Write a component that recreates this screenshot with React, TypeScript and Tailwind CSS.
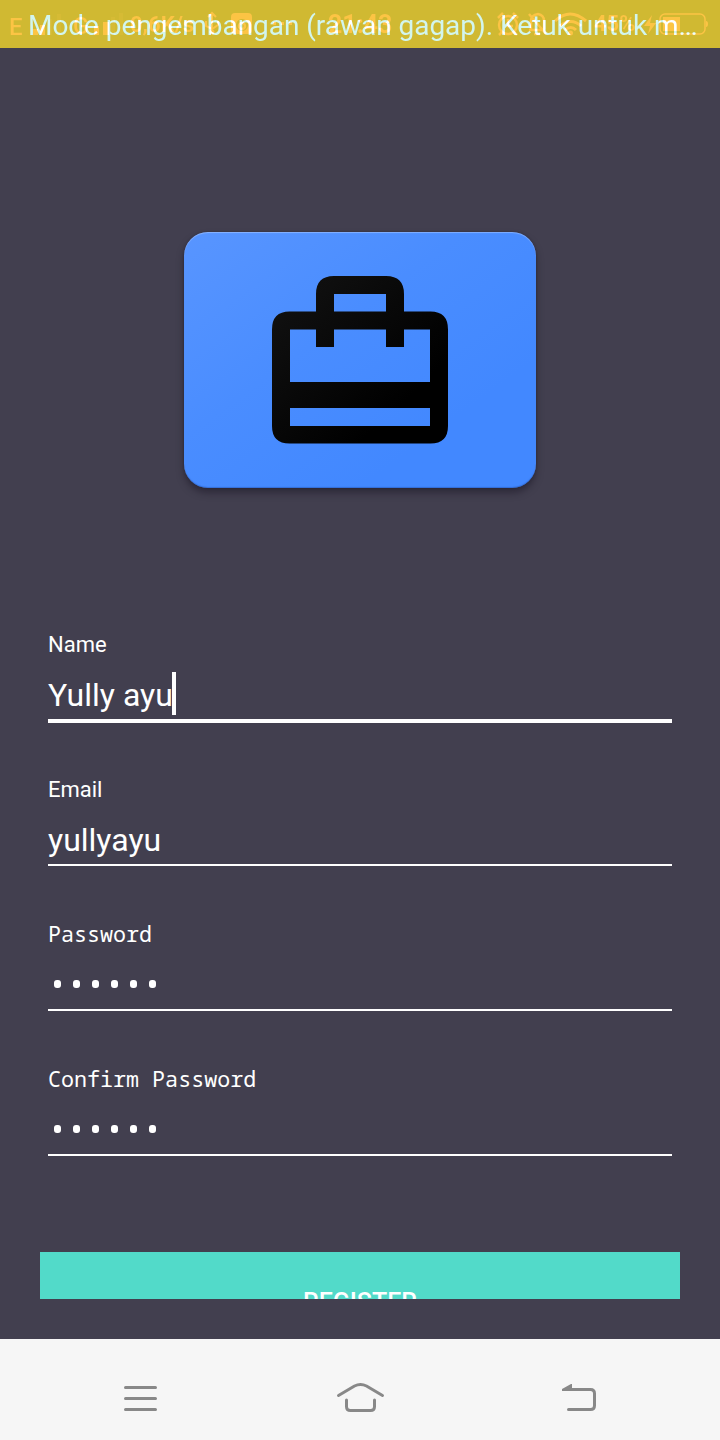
import React from "react";

function StatusBar() {
  return (
    <header className="relative isolate flex h-12 items-center overflow-hidden bg-[#d0b932]">
      <p className="w-full pt-[3px] pl-7 text-[27.95px] leading-[34px] whitespace-nowrap text-[#d2f5ee]">
        Mode pengembangan (rawan gagap). Ketuk untuk m<span className="tracking-[-1.4px]">...</span>
      </p>
      <div className="absolute inset-0 font-medium text-[#2c0b12] mix-blend-plus-lighter">
        <span className="absolute top-[12px] left-[9px] text-[24px] leading-[30px]">E</span>
        <span className="absolute top-[12px] left-[73px] text-[23px] leading-[30px]">G</span>
        <span className="absolute top-[10px] left-[130px] text-[22px] leading-[30px] font-bold">0,6K/s</span>
        <span className="absolute top-[9px] left-[328px] text-[25px] leading-[32px] font-bold">21:43</span>
        <span className="absolute top-[9px] left-[594px] text-[22px] leading-[30px] font-bold">45%</span>
        <svg className="absolute inset-0" width="720" height="48" viewBox="0 0 720 48" fill="none" stroke="currentColor" strokeWidth="2.5">
          <path d="M33 29h5v6h-5zM40 25h5v10h-5zM94 26h5v9h-5zM103 22h6v13h-6z" fill="currentColor" stroke="none" />
          <path d="M48 19h4v16h-4zM57 14h4v21h-4zM111 17h4v18h-4zM119 13h4v22h-4z" fill="currentColor" stroke="none" opacity=".14" />
          <path d="M212 14v18M208 17l4-4 4 4M206 21v5l6 3 6-4v-4" strokeWidth="2" />
          <circle cx="212" cy="32" r="2.5" fill="currentColor" stroke="none" />
          <path fillRule="evenodd" d="M235 13h13q4 0 4 4v13q0 4-4 4h-13q-4 0-4-4V17q0-4 4-4zm7 6a6 6 0 1 0 0 12 6 6 0 0 0 0-12z" fill="currentColor" stroke="none" />
          <circle cx="242" cy="26" r="3" />
          <path d="M273 22h3v3h-3zM281 22h3v3h-3zM289 22h3v3h-3z" fill="currentColor" stroke="none" />
          <circle cx="508" cy="25" r="9" />
          <path d="M498 18l5-5M513 13l5 5M508 19v7h5M502 32l-3 3M514 32l3 3" />
          <path d="M529 30h16M531 29v-8q0-6 7-7 6 1 6 7v8M529 14l17 20M534 34h6" />
          <path d="M555 21q15-14 31 0M560 26q11-9 21 0M565 30q6-5 11 0" strokeWidth="3" />
          <circle cx="570.500" cy="33" r="2.500" fill="currentColor" stroke="none" />
          <path d="M652 15l-8 11h6l-2 8 8-11h-6z" fill="currentColor" stroke="none" />
          <rect x="660" y="14" width="45" height="20" rx="5" strokeWidth="1.5" />
          <path d="M663 17h17v14h-17zM706 21q2 0 2 3t-2 3z" fill="currentColor" stroke="none" />
        </svg>
      </div>
    </header>
  );
}

function Logo() {
  return (
    <div className="mx-auto mt-[184px] flex h-64 w-[352px] shrink-0 justify-center rounded-[24px] bg-linear-to-br from-[#5895ff] via-[#4a8dff] via-40% to-[#4288ff] to-75% pt-[44px] shadow-[0_5px_7px_rgba(25,22,35,0.5),0_0_2px_rgba(30,30,50,0.5),inset_0_1px_1px_rgba(255,255,255,0.3),inset_0_-1px_1px_rgba(20,60,140,0.35)]">
      <svg width="176" height="168" viewBox="0 0 176 168">
        <defs>
          <linearGradient id="ink" x1="0" y1="0" x2="1" y2="1">
            <stop offset="0" stopColor="#131313" />
            <stop offset=".75" stopColor="#000" />
          </linearGradient>
        </defs>
        <path
          fill="url(#ink)"
          fillRule="evenodd"
          d="M44 35.500V18Q44 0 62 0h52q18 0 18 18v17.500h26.500q17.500 0 17.500 18v96.500q0 17.500-17.500 17.500h-141Q0 167.500 0 150V53.500q0-18 17.500-18zM62 18v17.500h52V18zM18 53.500V106h140V53.500h-26V71h-18V53.500H62V71H44V53.500zM18 132v18h140v-18z"
        />
      </svg>
    </div>
  );
}

interface FieldProps {
  label: string;
  value?: string;
  focused?: boolean;
  secret?: boolean;
}

function Field({ label, value, focused, secret }: FieldProps) {
  return (
    <div className="h-[145px]">
      <div className={secret ? "h-[30px] font-['Noto_Sans_Mono','Droid_Sans_Mono','DejaVu_Sans_Mono',monospace] text-[21.7px] leading-[30px]" : "h-[30px] text-[22px] leading-[32px]"}>
        {label}
      </div>
      <div className="flex flex-col">
        <div className="flex h-[60px] items-center text-[32px] leading-[38px]">
          {secret ? (
            <div className="flex gap-[12px] pt-[9px] pl-[6px]">
              {[0, 1, 2, 3, 4, 5].map((i) => (
                <span key={i} className="h-2 w-[7px] rounded-[3px] bg-white" />
              ))}
            </div>
          ) : (
            <span className="pt-[12px]">{value}</span>
          )}
          {focused && <span className="mt-[9px] -ml-px h-[43px] w-1 bg-white" />}
        </div>
        <div className={focused ? "h-1 bg-white" : "h-0.5 bg-white"} />
      </div>
    </div>
  );
}

function NavBar() {
  return (
    <nav className="h-[101px] shrink-0 bg-[#f6f6f6]">
      <svg width="720" height="101" viewBox="0 0 720 101" fill="none" stroke="#888" strokeWidth="3" strokeLinecap="round" strokeLinejoin="round">
        <path d="M125.500 48.500h30M125.500 59.500h30M125.500 70.500h30" />
        <path d="M338.500 56.500l16-9.500q6-3 12 0l16 9.500M346.500 61v6.500q0 4 4 4h20q4 0 4-4v-6.500" />
        <path d="M568.500 70.500h22q4 0 4-4v-12q0-4-4-4h-22" />
        <path d="M562 52v-2l9-5h1v7z" fill="#888" stroke="none" />
      </svg>
    </nav>
  );
}

export default function App() {
  return (
    <div className="flex h-[1440px] w-[720px] flex-col overflow-hidden bg-[#423f4f] font-['Roboto',sans-serif] text-white">
      <StatusBar />
      <main className="flex h-[1291px] shrink-0 flex-col">
        <Logo />
        <form className="mx-12 mt-[141px] h-[623px] shrink-0">
          <Field label="Name" value="Yully ayu" focused />
          <Field label="Email" value="yullyayu" />
          <Field label="Password" secret />
          <Field label="Confirm Password" secret />
        </form>
        <div className="mx-10 h-[47px] shrink-0 overflow-hidden bg-[#52dac9]">
          <button type="button" className="h-[96px] w-full pt-[6px] text-[25px] leading-[30px] font-medium">
            REGISTER
          </button>
        </div>
      </main>
      <NavBar />
    </div>
  );
}
